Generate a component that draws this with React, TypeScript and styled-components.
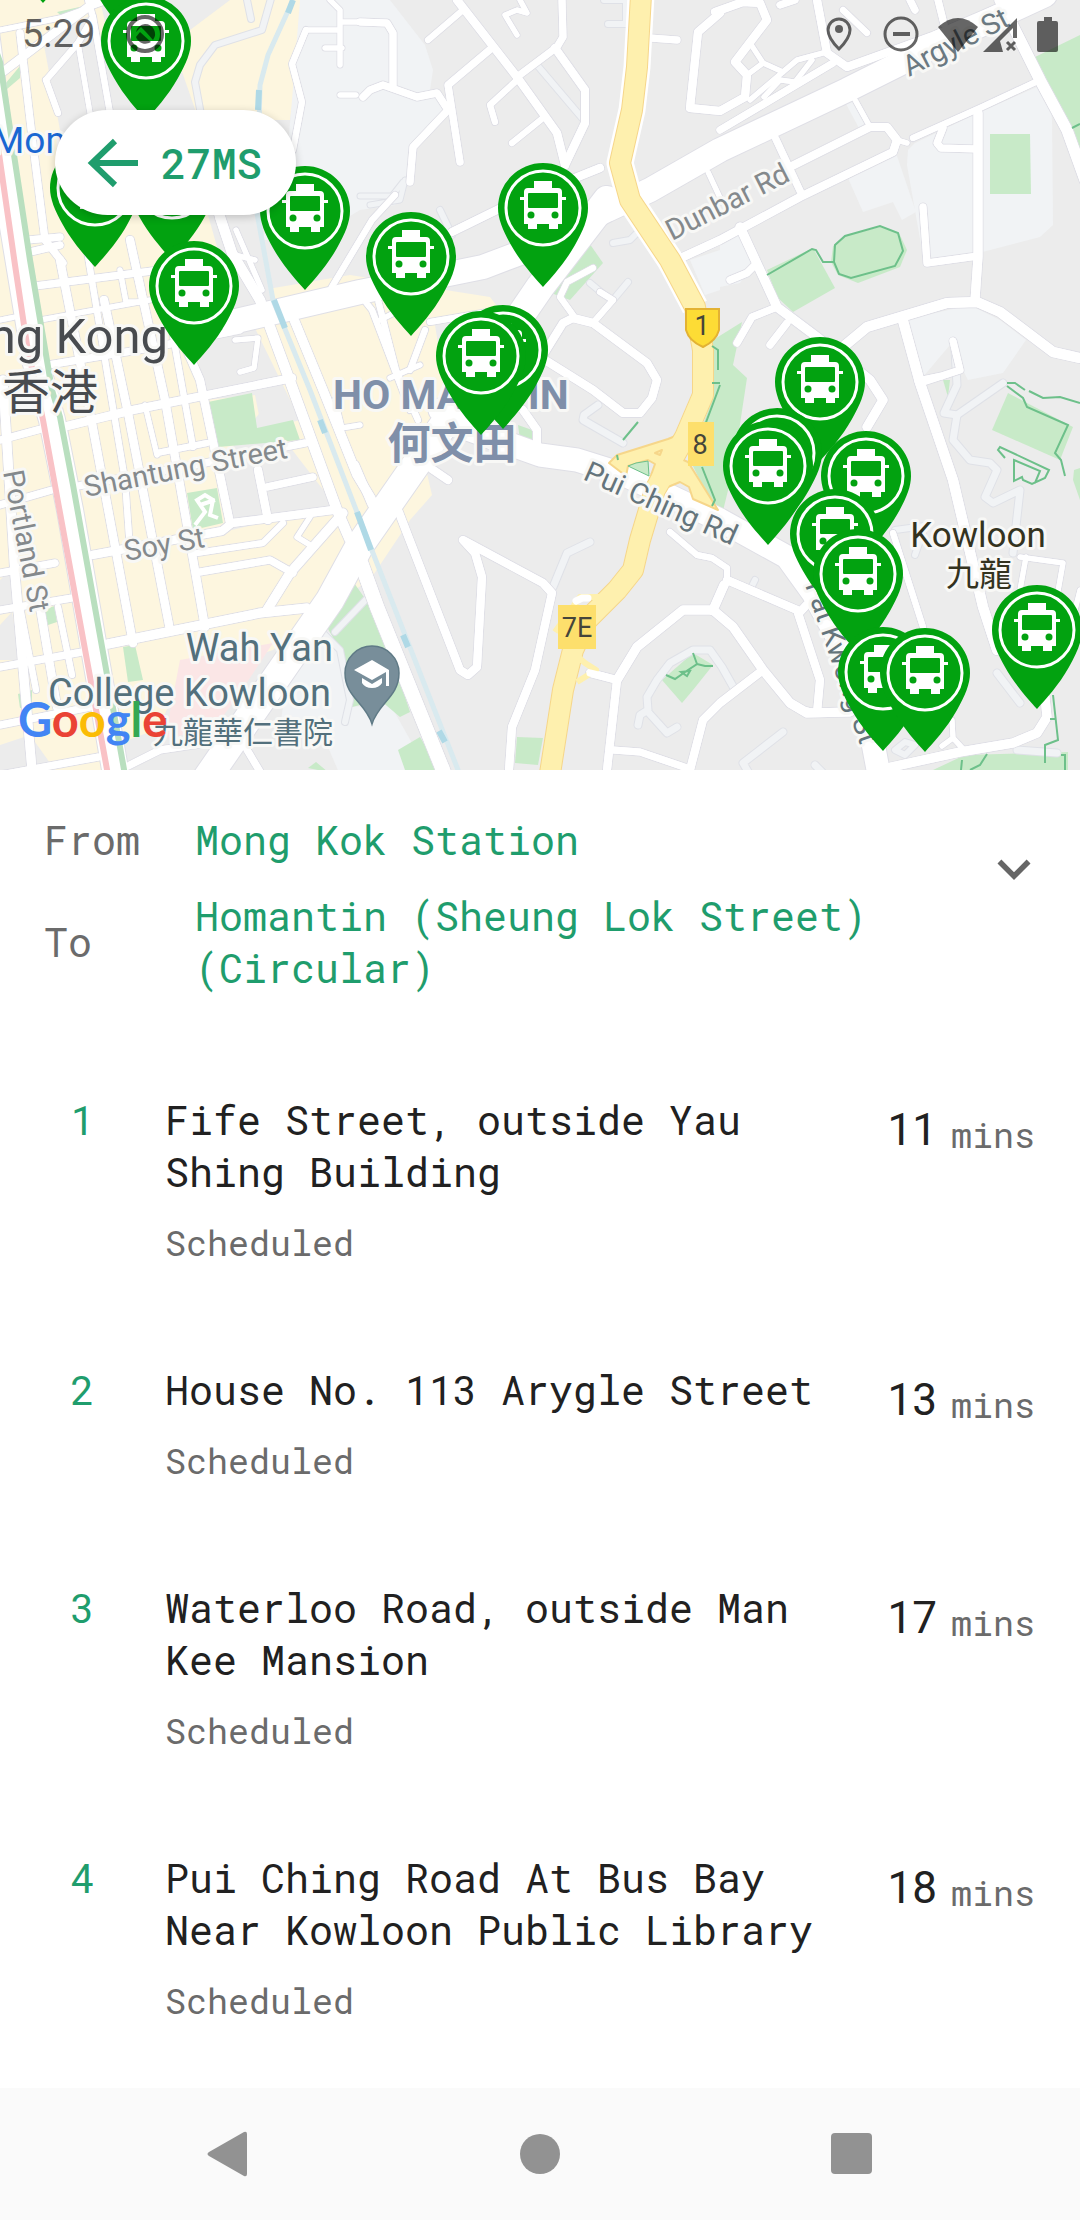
import React from "react";
import styled, { createGlobalStyle } from "styled-components";

const MONO = '"Roboto Mono", "Liberation Mono", monospace';
const SANS = 'Roboto, "Noto Sans CJK TC", sans-serif';
const GREEN = "#1f9d6d";

const GlobalStyle = createGlobalStyle`
  *, *::before, *::after { box-sizing: border-box; }
  body { margin: 0; background: #ffffff; font-family: ${MONO}; }
`;

const Screen = styled.div`
  min-height: 100vh;
  display: flex;
  flex-direction: column;
  background: #ffffff;
`;

/* ---------- map ---------- */

const MapPane = styled.section`
  position: relative;
  overflow: hidden;
`;

const MapCanvas = styled.svg`
  display: block;
  width: 100%;
  height: auto;
`;

const Label = styled.text<{ $size: number; $color: string; $weight?: number }>`
  font-family: ${SANS};
  font-size: ${(p) => p.$size}px;
  font-weight: ${(p) => p.$weight ?? 400};
  fill: ${(p) => p.$color};
  stroke: #f8f8f6;
  stroke-width: 6px;
  stroke-linejoin: round;
  paint-order: stroke;
`;

const BadgeText = styled.text`
  font-family: ${SANS};
  font-size: 27px;
  fill: #45453a;
  text-anchor: middle;
`;

const LogoText = styled.text`
  font-family: Lato, sans-serif;
  font-size: 47px;
  font-weight: 700;
`;

type Road = [string, number?];

const streets: Road[] = [
  // Mong Kok grid
  ["M20 33L33 145L45 240L63 263", 7],
  ["M78 43L90 113", 5],
  ["M93 17L110 113", 6],
  ["M46 80L58 113"],
  ["M0 74L100 -2", 8],
  ["M46 80L78 43L93 17L88 0", 6],
  ["M0 30L60 18L110 0", 5],
  ["M60 260L92 423L133 643", 8],
  ["M82 220L110 390L125 480L130 550", 6],
  ["M104 300L128 413L170 630", 8],
  ["M145 405L157 455", 5],
  ["M130 240L165 400L205 627", 8],
  ["M172 330L193 447", 6],
  ["M165 300L200 380L230 523", 8],
  ["M120 270L126 302L142 302", 5],
  ["M258 470L268 520", 8],
  ["M28 240L60 237M35 286L160 270M30 252L60 245", 7],
  ["M0 320L20 316M40 320L150 300", 5],
  ["M48 365L150 348L240 330", 7],
  ["M0 180L30 310L45 390", 5],
  ["M3 380L15 575L32 770", 9],
  ["M40 607L57 707", 8],
  ["M58 607L72 675", 6],
  ["M20 607L36 690", 6],
  ["M0 440L45 428M0 505L52 490M0 573L55 563M0 610L72 598M0 667L82 652M0 725L95 706M0 775L104 756", 7],
  ["M63 427L133 410L292 378", 8],
  ["M72 487L190 466L305 443", 7],
  ["M157 453L207 443", 6],
  ["M92 555L222 531L232 523L333 510", 8],
  ["M197 553L263 543L283 523", 6],
  ["M200 572L270 560L293 573", 7],
  ["M103 645L260 613L307 608", 9],
  ["M267 487L313 477", 7],
  ["M120 770L160 750L240 738L262 775", 7],
  ["M267 610L290 573L343 513", 9],
  ["M310 545L297 537L310 517", 5],
  ["M220 217L232 253L260 300L287 373L337 510L350 540", 10],
  ["M217 215L235 255L255 260M236 230L262 290", 5],
  ["M293 317L323 390L357 475L372 500", 9],
  ["M235 340L258 338L254 368L240 372", 5],
  ["M352 285L372 310L410 410M378 300L396 370L418 420", 6],
  ["M390 378L420 365M380 320L400 310M360 425L342 428L335 400", 5],
  ["M330 290L372 220L395 195", 6],
  ["M330 0L340 10V65M306 30H340M325 48H342M340 22H372M340 95H356", 5],
  ["M306 30L292 64L302 102L293 150", 6],
  // north
  ["M457 0L517 77L557 133L565 165", 8],
  ["M463 10L428 40", 6],
  ["M493 47L448 85L460 162", 7],
  ["M360 22L387 23L393 33V87", 7],
  ["M363 97L370 90L383 85L417 97L437 93L448 110L413 147L410 182", 7],
  ["M517 77L557 47L563 37L562 0", 7],
  ["M555 48L585 90V123L565 165", 8],
  ["M517 80L490 105L495 122", 6],
  ["M543 118L512 143", 6],
  ["M520 0L527 13L517 10L505 15L517 35", 5],
  ["M452 232L503 207L600 168", 8],
  ["M650 38L677 40", 7],
  ["M720 13L698 32L690 108L720 111L745 97L747 75L735 62L767 20L760 3L743 2L715 12", 8],
  ["M747 75L763 63L750 43M763 63L783 72M750 100L797 60L823 53M764 97L780 80L795 82L812 60", 5],
  ["M817 0L827 53L847 67L933 36L1010 3", 8],
  ["M833 63L720 130", 7],
  ["M843 10L867 33", 6],
  ["M938 0L944 24M910 0L915 10M780 5L795 0", 7],
  ["M683 257L720 240L800 197L893 152L897 140L887 127H870L790 167", 8],
  ["M897 140L907 143M854 98L870 127", 5],
  ["M773 133L802 195", 7],
  ["M708 172L722 202", 5],
  ["M740 227L777 307L817 337L870 380L883 400L867 427", 9],
  ["M777 307L752 317L737 343M787 323L770 345M757 263L747 273L730 280", 7],
  ["M843 347L867 327L947 303L977 302L1000 312L1053 352L1080 358", 10],
  ["M975 300L978 257V113", 9],
  ["M913 138L980 108L1040 80", 6],
  ["M1000 0L1040 80L1067 130L1085 180", 11],
  ["M923 207L927 263L978 256", 7],
  ["M943 128L937 143L941 148L977 149", 7],
  ["M902 317L920 383L953 480L983 607L997 650", 10],
  ["M920 383L960 370L953 341M918 381L942 376", 7],
  // middle
  ["M398 510L460 670L468 675L477 667L482 577L475 553L463 540L543 583L552 593L535 670L512 727L509 770", 8],
  ["M360 560L377 607L443 770L450 790", 14],
  ["M355 465L372 505M423 463L448 480", 8],
  ["M523 410L537 430V447", 8],
  ["M545 360L593 390L623 413H640L652 398L657 380L647 363L593 323L573 318L563 323L545 352", 8],
  ["M593 323L613 300L600 292M573 315L560 297L567 282L593 268", 6],
  ["M430 322L500 310M410 370L425 330", 6],
  ["M590 673L617 680L607 770", 8],
  ["M617 680L637 647L683 610L713 610L724 585M713 610L733 627L763 670L790 703L807 713L850 712", 9],
  ["M763 670L720 703L703 720L690 770", 8],
  ["M613 750L640 752L687 768", 7],
  ["M670 532L697 555L712 558L727 568L727 582L712 612", 6],
  ["M727 580L797 610L820 680L817 713M799 613L816 595", 8],
  ["M817 713L805 710", 6],
  ["M887 768L960 752L1013 743L1037 733L1047 717L1045 697", 9],
  ["M893 533L923 627", 6],
  ["M1020 557L1063 563L1057 597M1026 557L1020 590M1080 590L1070 630", 5],
  ["M952 720L953 738L942 746M953 738L966 752", 5],
];

const lanes: Road[] = [
  ["M247 0L251 19M272 -5L262 30L215 45L200 65L195 82L202 120", 6],
  ["M537 65L582 118", 6],
  ["M405 180L400 200L370 205M360 196H392L403 182", 5],
  ["M440 210L452 235M613 243L630 240L640 230M608 24H626V0H604", 6],
  ["M613 300L628 282M590 283L602 293", 6],
  ["M553 587L567 553L590 542", 7],
  ["M623 443L583 420L584 415L598 405", 7],
  ["M638 725L640 715L648 710L647 697L657 680L670 663L693 650H710L722 667L735 690M648 712L667 733L677 727", 7],
  ["M1003 383L957 415L944 413L957 385L955 350", 7],
  ["M957 415L953 440L970 460L990 463L997 470L985 497L993 503L1020 490L1013 553", 7],
  ["M997 673L1020 703M783 732L743 763L750 775M1017 750L1057 753M815 765L830 780", 7],
  ["M895 530L925 526L915 555M755 580L750 590M895 750L905 755L915 745L905 742Z", 6],
  ["M375 590L335 632M318 628L340 650L350 700L345 722", 6],
];

const mainRoads: Road[] = [
  ["M232 322L360 292L483 267L520 253L607 210L650 190L720 150L847 90L933 47L1045 -5", 24],
  ["M607 200L540 287L490 360L440 430L360 545L330 600L207 778", 28],
  ["M440 410L470 430L540 455L577 460L625 475L720 520L787 557L813 593L850 660L863 690L880 780", 23],
  ["M-18 0L2 160L35 360L52 420L70 510L116 775", 26],
];

const yellowRoad =
  "M641 -5L637 67L632 110L620 163L630 200L670 260L695 307L703 350V395L685 437L655 490L640 540L633 570L617 590L587 620L573 650L563 690L549 780";

const parks = [
  "M990 134H1030L1031 194H990Z",
  "M1035 57L1080 35V167L1067 130Z",
  "M767 270L813 248L835 288L793 312L777 297Z",
  "M833 246L845 236L880 227L899 233L907 250L900 267L858 283L838 275L831 262Z",
  "M705 345L742 322L733 365L747 378L733 470L722 515L712 505L690 460L712 400Z",
  "M1008 393L1073 427L1060 460L992 430Z",
  "M1074 470L1080 468V500L1073 480Z",
  "M933 770L965 755L1068 752V770Z",
  "M517 737L543 738L538 765L515 763Z",
  "M662 680L693 653L713 665L693 690L682 703Z",
  "M543 290L587 240L603 263L570 300Z",
  "M208 402L252 393L257 428L293 420L300 440L218 447Z",
  "M187 493L217 488L223 523L193 530Z",
  "M123 647L135 645L143 680L128 682Z",
  "M43 609L55 606L57 622L48 625Z",
  "M323 620L352 580L380 620L410 712L400 717L380 700L352 707L340 650Z",
  "M398 750L420 737L440 770H405Z",
  "M308 768L316 762L328 772Z",
  "M57 12L84 6L66 20ZM0 90L20 66L20 78L0 95Z",
  "M518 425L532 430V444L520 440Z",
  "M943 380L950 380L948 397Z",
  "M18 694L32 690V705L20 708Z",
];

const trails = [
  "M834 262L835 245L845 236L880 226L898 233L903 251L895 266L851 278L839 274L834 262H823L816 250L812 249L767 275",
  "M1072 128L1080 124",
  "M1007 383L1015 383L1025 390M1029 391L1043 398L1060 397L1080 403M1007 386L1023 398L1027 407L1068 425L1055 453L1061 460L1065 476",
  "M1005 458L998 450L1000 447L1049 470L1045 478L1032 484L1023 480L1022 477L1014 481V460L1040 471L1035 483",
  "M712 346L718 350V370M712 383H720M720 385L705 425M702 467L715 500L712 506",
  "M623 440L638 422M617 455L618 460",
  "M666 675L675 679L688 670L697 664L693 653M697 664L705 666H713M681 672L690 671L687 676Z",
  "M1053 695L1058 740L1045 745V763M1050 719H1055M987 754L980 765L970 770M962 760L961 770M1061 755H1065V770",
];

const schools = [
  "M300 0H390L425 45L433 70L430 90L450 112L413 147L408 182L395 205L360 210L310 240L262 240L285 180L292 100Z",
  "M908 150L915 143L978 113L1048 82L1052 120L1053 225L1040 237L925 267L907 165Z",
  "M848 178L895 150L916 212L902 220L893 202L863 212Z",
  "M905 320L970 305L1000 320L1026 340L1003 373L968 380L950 345L922 378Z",
  "M720 245L740 232L755 262L740 283L720 287Z",
  "M690 260L720 250V290L705 295Z",
  "M845 102L855 98L868 124L860 130Z",
  "M290 648L318 625L340 640L352 707L390 704L430 775H340L325 740L280 730Z",
];

const greyPatches = [
  "M42 35L92 15L128 112L140 200L95 190L60 130Z",
  "M100 0H230L190 30L178 60L196 112L125 112Z",
  "M208 215L270 200L262 245L275 300L245 308L300 420L262 430L255 395L205 400L195 340L235 310Z",
  "M262 410L300 460L335 505L232 530L222 460Z",
  "M0 580L10 570L16 610L0 615ZM0 625L12 612L20 660H0ZM0 745L30 735L55 770H0Z",
  "M115 745L155 730L200 760L195 770H112Z",
];

const pins: [number, number][] = [
  [43, -76], [130, -41], [146, 41], [95, 188], [172, 181], [194, 286], [305, 211],
  [543, 208], [411, 257], [503, 350], [481, 356], [820, 382], [777, 453], [768, 466],
  [866, 476], [835, 534], [858, 574], [883, 672], [925, 673], [1037, 630],
];

function BusPin({ x, y }: { x: number; y: number }) {
  return (
    <g transform={`translate(${x} ${y})`}>
      <path
        d="M0 79C-8 70-22 55-32 37C-40 23-45 11-45 0A45 45 0 0 1 45 0C45 11 40 23 32 37C22 55 8 70 0 79Z"
        fill="#02a210"
      />
      <circle r="37" fill="#02a210" stroke="#fff" strokeWidth="3" />
      <path
        fill="#fff"
        d="M-9-27H9V-20H15Q19-20 19-16V-11H23V-8H19V16H15V21H6V16H-6V21H-15V16H-19V-8H-23V-11H-19V-16Q-19-20-15-20H-9Z"
      />
      <rect x="-15" y="-15" width="30" height="15" rx="1" fill="#02a210" />
      <circle cx="-12" cy="7" r="3.5" fill="#02a210" />
      <circle cx="12" cy="7" r="3.5" fill="#02a210" />
    </g>
  );
}

function Roads({ list, fill, edge }: { list: Road[]; fill: string; edge: string }) {
  return (
    <g fill="none" strokeLinecap="round" strokeLinejoin="round">
      {list.map(([d, w = 6]) => (
        <path key={"e" + d} d={d} stroke={edge} strokeWidth={w + 2} />
      ))}
      {list.map(([d, w = 6]) => (
        <path key={d} d={d} stroke={fill} strokeWidth={w} />
      ))}
    </g>
  );
}

function RouteMap() {
  return (
    <MapCanvas viewBox="0 0 1080 770" role="img" aria-label="Map of bus stops">
      <rect width="1080" height="770" fill="#ececec" />
      <path
        fill="#fdf6df"
        d="M0 0H325L300 50L290 120L262 120L262 290L350 275L490 297L500 310L435 325L450 420L425 465L432 495L410 520L370 580L300 625L273 650L180 680L140 770H0Z"
      />
      {greyPatches.map((d) => <path key={d} d={d} fill="#ececec" />)}
      {schools.map((d) => <path key={d} d={d} fill="#f1f3f5" />)}
      <path d="M180 660L273 643L240 693L213 730L165 738Z" fill="#fbe6e6" />
      {parks.map((d) => <path key={d} d={d} fill="#c8eac8" />)}

      <Roads list={lanes} fill="#f1f3f5" edge="#dfe1e7" />
      <Roads list={streets} fill="#ffffff" edge="#dfdfe6" />
      <Roads list={mainRoads} fill="#ffffff" edge="#dfdfe6" />
      <Roads list={streets} fill="#ffffff" edge="none" />
      <path d="M195 525L205 512L197 500L205 495L213 500L210 515L218 518M200 505L215 500" fill="none" stroke="#fff" strokeWidth="4" />

      {/* railway lines */}
      <g fill="none">
        <path d="M293 0L268 55L260 85L257 213L273 300L310 390L360 520L460 775" stroke="#d9eaef" strokeWidth="5" />
        <path d="M293 0L288 13M259 90L258 110M274 300L285 328M320 420L325 433M357 512L371 550M403 635L408 647M439 731L445 742" stroke="#afd9e6" strokeWidth="6" />
        <path d="M-3 140L15 265L27 345L43 420L108 775" stroke="#f9c2c6" strokeWidth="6" />
        <path d="M-6 45L0 62L14 155L30 260L52 390L60 417L73 485L125 775" stroke="#b9dfbf" strokeWidth="6" />
      </g>

      {/* expressway */}
      <g fill="none" strokeLinejoin="round">
        <path d="M641 -5L637 67L632 110L620 163L630 200L670 260L695 307" stroke="#ffffff" strokeWidth="27" />
        <path d={yellowRoad} stroke="#f6d68a" strokeWidth="22" />
        <path d="M609 463L617 455L668 439L690 430L664 482L650 478L655 464L648 460L628 466L626 476Z" fill="#fef0ae" stroke="#f6d68a" strokeWidth="2" />
        <path d="M688 462L718 510L693 499L689 487L680 482L668 487L658 482L672 455Z" fill="#fef0ae" stroke="#f6d68a" strokeWidth="2" />
        <path d={yellowRoad} stroke="#fef0ae" strokeWidth="20" />
        <path d="M555 632L580 597H600M570 650L585 663L596 670L577 682" stroke="#fef0ae" strokeWidth="6" />
        <path d="M655 453L662 450L660 455Z" fill="#fef0ae" stroke="#f6d68a" strokeWidth="2" />
      </g>
      <path d="M628 466L636 463L648 461L649 476Z" fill="#c8eac8" stroke="#6dc08a" strokeWidth="1" />
      <path d="M576 601L582 598H588M590 673L606 677" fill="none" stroke="#fff" strokeWidth="7" strokeLinecap="round" />
      {trails.map((d) => <path key={d} d={d} fill="none" stroke="#6dc08a" strokeWidth="2" />)}

      {/* road badges */}
      <path d="M686 309H719V330Q716 341 703 347Q689 341 686 330Z" fill="#fddc35" stroke="#e3b233" strokeWidth="2" />
      <BadgeText x="702" y="335">1</BadgeText>
      <rect x="688" y="422" width="26" height="44" fill="#fddf6c" />
      <BadgeText x="700" y="454">8</BadgeText>
      <rect x="558" y="605" width="38" height="44" fill="#fddf6c" />
      <BadgeText x="577" y="637">7E</BadgeText>

      {/* place and street names */}
      <Label $size={37} $color="#1a67d2" x="-8" y="153">Mong</Label>
      <Label $size={49} $color="#484b4f" x="168" y="353" textAnchor="end">Hong Kong</Label>
      <Label $size={48} $color="#484b4f" x="2" y="409">香港</Label>
      <Label $size={41} $color="#7f8fa9" $weight={700} x="333" y="409">HO MAN TIN</Label>
      <Label $size={43} $color="#7f8fa9" $weight={700} x="452" y="459" textAnchor="middle">何文田</Label>
      <Label $size={29} $color="#84898c" transform="translate(86 497) rotate(-11)">Shantung Street</Label>
      <Label $size={29} $color="#84898c" transform="translate(126 561) rotate(-10)">Soy St</Label>
      <Label $size={29} $color="#84898c" transform="translate(3 472) rotate(79)">Portland St</Label>
      <Label $size={29} $color="#84898c" transform="translate(672 241) rotate(-27)">Dunbar Rd</Label>
      <Label $size={29} $color="#6b7981" transform="translate(909 77) rotate(-27)">Argyle St</Label>
      <Label $size={29} $color="#64747b" transform="translate(582 479) rotate(24)">Pui Ching Rd</Label>
      <Label $size={29} $color="#64747b" transform="translate(805 585) rotate(71)">Fat Kwong St</Label>
      <Label $size={35} $color="#34331f" x="978" y="547" textAnchor="middle">Kowloon</Label>
      <Label $size={33} $color="#34331f" x="979" y="586" textAnchor="middle">九龍</Label>
      <Label $size={38} $color="#53707c" x="333" y="661" textAnchor="end">Wah Yan</Label>
      <Label $size={38} $color="#53707c" x="331" y="706" textAnchor="end">College Kowloon</Label>
      <Label $size={30} $color="#53707c" x="333" y="743" textAnchor="end">九龍華仁書院</Label>

      <g transform="translate(372 673)">
        <path d="M0 51C-6 30-27 24-27 0A27 27 0 0 1 27 0C27 24 6 30 0 51Z" fill="#788e9a" stroke="#5f7a86" strokeWidth="1.5" />
        <path d="M0-13L-18-3L0 7L14-1V13H17V-3ZM-10 5V10Q-7 15 0 15Q7 15 10 10V5L0 11Z" fill="#fff" />
      </g>

      {pins.map(([x, y]) => <BusPin key={`${x}-${y}`} x={x} y={y} />)}

      <LogoText x="18" y="737">
        <tspan fill="#4285f4">G</tspan>
        <tspan fill="#ea4335">o</tspan>
        <tspan fill="#fbbc05">o</tspan>
        <tspan fill="#4285f4">g</tspan>
        <tspan fill="#34a853">l</tspan>
        <tspan fill="#ea4335">e</tspan>
      </LogoText>
    </MapCanvas>
  );
}

/* ---------- overlays on the map ---------- */

const StatusBar = styled.div`
  position: absolute;
  inset: 0 0 auto 0;
  height: 68px;
  padding: 0 20px 0 22px;
  display: flex;
  align-items: center;
  gap: 30px;
  color: rgba(0, 0, 0, 0.6);
  font-family: ${SANS};
  font-size: 38px;
  line-height: 68px;
`;

const StatusIcons = styled.svg`
  margin-left: auto;
`;

const BackPill = styled.button`
  position: absolute;
  left: 55px;
  top: 110px;
  height: 105px;
  padding: 0 34px 0 32px;
  display: flex;
  align-items: center;
  gap: 22px;
  border: 0;
  border-radius: 53px;
  background: #ffffff;
  box-shadow: 0 2px 8px rgba(0, 0, 0, 0.2);
  color: ${GREEN};
  font-family: ${MONO};
  font-size: 42px;
  font-weight: 500;
`;

/* ---------- route header ---------- */

const RouteHeader = styled.header`
  display: flex;
  align-items: flex-start;
  padding: 44px 33px 54px 44px;
`;

const RouteEnds = styled.dl`
  flex: 1;
  margin: 0;
  display: grid;
  grid-template-columns: 151px 1fr;
  align-items: center;
  row-gap: 24px;
  font-size: 40px;
  line-height: 52px;
`;

const EndLabel = styled.dt`
  color: #6b6b6b;
`;

const EndName = styled.dd`
  margin: 0;
  color: ${GREEN};
`;

const ExpandButton = styled.button`
  padding: 22px 0;
  border: 0;
  background: none;
  color: #666666;
  line-height: 0;
`;

/* ---------- stop list ---------- */

const StopList = styled.ol`
  margin: 0;
  padding: 0;
  list-style: none;
`;

const Stop = styled.li`
  display: grid;
  grid-template-columns: 165px 1fr auto;
  padding: 46px 45px 54px 0;
`;

const StopNumber = styled.span`
  text-align: center;
  color: ${GREEN};
  font-size: 40px;
  line-height: 52px;
`;

const StopText = styled.div`
  max-width: 700px;
  display: flex;
  flex-direction: column;
  gap: 22px;
`;

const StopName = styled.span`
  color: #212121;
  font-size: 40px;
  line-height: 52px;
`;

const StopNote = styled.span`
  color: #6b6b6b;
  font-size: 35px;
  line-height: 44px;
`;

const Eta = styled.div`
  align-self: start;
  padding-top: 8px;
  display: flex;
  align-items: flex-end;
  gap: 14px;
`;

const Minutes = styled.span`
  color: #212121;
  font-family: ${SANS};
  font-size: 44px;
  line-height: 56px;
`;

const Unit = styled.span`
  color: #6b6b6b;
  font-size: 35px;
  line-height: 48px;
`;

/* ---------- system navigation ---------- */

const NavBar = styled.nav`
  margin-top: auto;
  height: 132px;
  display: flex;
  justify-content: center;
  background: #fafafa;
`;

const NavButton = styled.button`
  flex: 0 1 312px;
  display: flex;
  align-items: center;
  justify-content: center;
  padding: 0;
  border: 0;
  background: none;
  color: #929292;
`;

const stops = [
  { name: "Fife Street, outside Yau Shing Building", mins: 11 },
  { name: "House No. 113 Arygle Street", mins: 13 },
  { name: "Waterloo Road, outside Man Kee Mansion", mins: 17 },
  { name: "Pui Ching Road At Bus Bay Near Kowloon Public Library", mins: 18 },
];

export default function App() {
  return (
    <Screen>
      <GlobalStyle />
      <MapPane>
        <RouteMap />
        <StatusBar>
          <span>5:29</span>
          <svg width="40" height="40" viewBox="0 0 40 40" aria-hidden="true">
            <circle cx="20" cy="20" r="17" fill="none" stroke="currentColor" strokeWidth="4" />
            <path d="M20 10A10 10 0 0 1 28 26L21 18L16 13L11 18A10 10 0 0 1 20 10ZM15 18L26 28A10 10 0 0 1 11 23Z" fill="currentColor" />
          </svg>
          <StatusIcons width="240" height="40" viewBox="820 12 240 40" aria-hidden="true">
            <path d="M839 17A11 11 0 0 0 828 28C828 35 835 43 839 47C843 43 850 35 850 28A11 11 0 0 0 839 17Z" fill="none" stroke="currentColor" strokeWidth="3" />
            <circle cx="839" cy="27" r="4" fill="currentColor" />
            <circle cx="901" cy="32" r="16" fill="none" stroke="currentColor" strokeWidth="3" />
            <path d="M893 32H910" stroke="currentColor" strokeWidth="4" />
            <path d="M938 25Q958 7 978 25L958 50Z" fill="currentColor" />
            <path d="M983 50L1017 16V36H1013V26L1000 39L1003 50Z" fill="currentColor" />
            <path d="M1007 40L1015 48M1015 40L1007 48" stroke="currentColor" strokeWidth="3" />
            <path d="M1044 15H1052V19H1056Q1058 19 1058 21V48Q1058 50 1056 50H1039Q1037 50 1037 48V21Q1037 19 1039 19H1044Z" fill="currentColor" />
          </StatusIcons>
        </StatusBar>
        <BackPill type="button">
          <svg width="52" height="50" viewBox="0 0 52 50" aria-hidden="true">
            <path d="M51 25H5M28 3L5 25L28 47" fill="none" stroke="currentColor" strokeWidth="6" />
          </svg>
          <span>27MS</span>
        </BackPill>
      </MapPane>

      <RouteHeader>
        <RouteEnds>
          <EndLabel>From</EndLabel>
          <EndName>Mong Kok Station</EndName>
          <EndLabel>To</EndLabel>
          <EndName>Homantin (Sheung Lok Street) (Circular)</EndName>
        </RouteEnds>
        <ExpandButton type="button" aria-label="Show route options">
          <svg width="66" height="66" viewBox="0 0 24 24" aria-hidden="true">
            <path d="M16.59 8.59L12 13.17L7.41 8.59L6 10L12 16L18 10Z" fill="currentColor" />
          </svg>
        </ExpandButton>
      </RouteHeader>

      <StopList>
        {stops.map((stop, i) => (
          <Stop key={stop.name}>
            <StopNumber>{i + 1}</StopNumber>
            <StopText>
              <StopName>{stop.name}</StopName>
              <StopNote>Scheduled</StopNote>
            </StopText>
            <Eta>
              <Minutes>{stop.mins}</Minutes>
              <Unit>mins</Unit>
            </Eta>
          </Stop>
        ))}
      </StopList>

      <NavBar aria-label="System">
        <NavButton type="button" aria-label="Back">
          <svg width="44" height="46" viewBox="0 0 44 46" aria-hidden="true">
            <path d="M38 1Q41 0 41 3V43Q41 46 38 45L3 25Q0 23 3 21Z" fill="currentColor" />
          </svg>
        </NavButton>
        <NavButton type="button" aria-label="Home">
          <svg width="42" height="42" viewBox="0 0 42 42" aria-hidden="true">
            <circle cx="21" cy="21" r="20" fill="currentColor" />
          </svg>
        </NavButton>
        <NavButton type="button" aria-label="Recent apps">
          <svg width="42" height="42" viewBox="0 0 42 42" aria-hidden="true">
            <rect width="41" height="41" rx="4" fill="currentColor" />
          </svg>
        </NavButton>
      </NavBar>
    </Screen>
  );
}
